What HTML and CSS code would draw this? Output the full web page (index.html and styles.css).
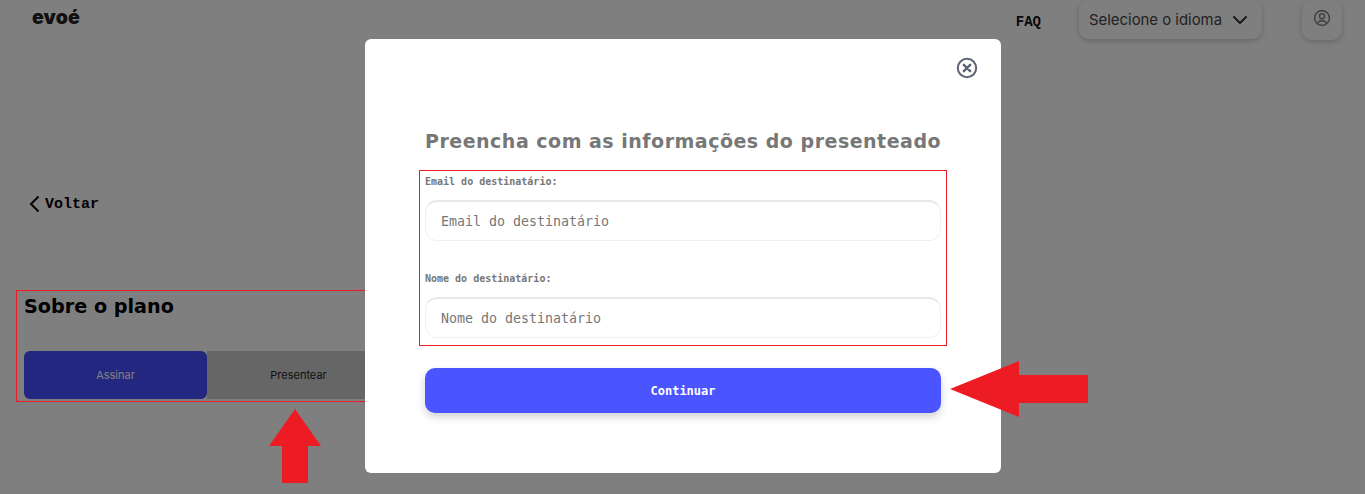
FILE: index.html
```html
<!DOCTYPE html>
<html lang="pt-BR">
<head>
<meta charset="utf-8">
<title>Evoé</title>
<link rel="stylesheet" href="styles.css">
</head>
<body>
<div class="page">
  <header class="topbar">
    <div class="logo">evoé</div>
    <nav class="topnav">
      <a class="faq">FAQ</a>
      <div class="lang"><span>Selecione o idioma</span>
        <svg width="16" height="10" viewBox="0 0 16 10"><path d="M2 2l6 6 6-6" fill="none" stroke="#333" stroke-width="2" stroke-linecap="round" stroke-linejoin="round"/></svg>
      </div>
      <div class="user">
        <svg width="18" height="18" viewBox="0 0 18 18" fill="none" stroke="#888" stroke-width="1.6"><circle cx="9" cy="9" r="7.4"/><circle cx="9" cy="7.3" r="2.5"/><path d="M4.6 14.2c1-1.9 2.6-2.6 4.4-2.6s3.400.7 4.400 2.600"/></svg>
      </div>
    </nav>
  </header>
  <a class="back">
    <svg width="11" height="18" viewBox="0 0 11 18"><path d="M9.500 1.500L2 9l7.500 7.500" fill="none" stroke="#000" stroke-width="2"/></svg>
    <span>Voltar</span>
  </a>
  <section class="plan">
    <h2>Sobre o plano</h2>
    <div class="tabs">
      <button class="tab tab-on">Assinar</button>
      <button class="tab">Presentear</button>
    </div>
  </section>
</div>

<div class="overlay">
  <div class="modal">
    <div class="modal-top">
      <svg width="22" height="22" viewBox="0 0 22 22" fill="none" stroke="#5b6470" stroke-width="2"><circle cx="11" cy="11" r="9.200"/><path d="M7.800 7.800l6.400 6.400M14.200 7.800l-6.400 6.400" stroke-linecap="round" stroke-width="2.400"/></svg>
    </div>
    <h1>Preencha com as informações do presenteado</h1>
    <form class="form">
      <label class="field">
        <span class="field-label">Email do destinatário:</span>
        <input class="input" type="text" placeholder="Email do destinatário">
      </label>
      <label class="field">
        <span class="field-label">Nome do destinatário:</span>
        <input class="input" type="text" placeholder="Nome do destinatário">
      </label>
      <button class="submit" type="button">Continuar</button>
    </form>
  </div>
</div>

<div class="mark mark-plan"></div>
<div class="mark mark-form"></div>
<svg class="arrow arrow-up" width="52" height="74" viewBox="0 0 52 74"><polygon points="26,0 52,37 39,37 39,74 13,74 13,37 0,37" fill="#ed1c24"/></svg>
<svg class="arrow arrow-left" width="138" height="56" viewBox="0 0 138 56"><polygon points="0,28 69,0 69,14 138,14 138,42 69,42 69,56" fill="#ed1c24"/></svg>
</body>
</html>
```
FILE: styles.css
```css
* { box-sizing: border-box; }
html, body { margin: 0; height: 494px; overflow: hidden; background: #fff; }
body { font-family: "DejaVu Sans Mono", monospace; color: #000; }

.page { height: 494px; padding: 0 0 0 24px; }

.topbar { display: flex; justify-content: space-between; align-items: flex-start; height: 40px; padding-right: 23px; }
.logo { margin: 8px 0 0 8px; font-family: "Inter", sans-serif; font-weight: 900; font-size: 19.500px; line-height: 19px; letter-spacing: 0.100px; color: #222; }
.topnav { display: flex; align-items: flex-start; }
.faq { margin: 13px 38px 0 0; font-family: "Liberation Mono", monospace; font-weight: 700; font-size: 14px; line-height: 18px; color: #111; }
.lang { display: flex; align-items: center; justify-content: space-between; width: 183px; height: 39px; padding: 0 14px 0 10px; border-radius: 10px; background: #fff; box-shadow: 0 2px 6px rgba(0,0,0,.2); font-family: "Inter", sans-serif; font-size: 14.900px; color: #444; }
.user { display: flex; justify-content: center; align-items: center; width: 40px; height: 40px; margin-left: 40px; padding-bottom: 5px; border-radius: 10px; background: #fff; box-shadow: 0 2px 6px rgba(0,0,0,.2); }

.back { display: flex; align-items: center; gap: 5px; margin: 155px 0 0 5px; height: 18px; font-family: "Liberation Mono", monospace; font-weight: 700; font-size: 15px; color: #000; }

.plan { margin-top: 85px; }
.plan h2 { margin: 0; font-family: "DejaVu Sans", sans-serif; font-weight: 700; font-size: 19.200px; line-height: 18px; height: 53px; color: #000; }
.tabs { display: flex; width: 370px; }
.tab { flex: 0 0 183px; height: 48px; padding: 0; border: 0; border-radius: 6px; background: #cacdca; font-family: "Inter", sans-serif; font-size: 11px; color: #222; }
.tab + .tab { flex: 1; border-radius: 0; padding-right: 4px; }
.tab-on { background: #484ffe; color: #fff; }

.overlay { position: fixed; inset: 0; background: rgba(0,0,0,.5); display: flex; justify-content: center; padding: 39px 0 0 1px; }
.modal { width: 636px; height: 434px; background: #fff; border-radius: 6px; padding: 0 60px; }
.modal-top { display: flex; justify-content: flex-end; margin-right: -37px; padding-top: 18px; height: 87px; }
.modal h1 { margin: 0; height: 44px; font-family: "DejaVu Sans", sans-serif; font-weight: 700; font-size: 19px; line-height: 30px; color: #777; text-align: center; white-space: nowrap; letter-spacing: 0.500px; }

.form { display: flex; flex-direction: column; }
.field { display: flex; flex-direction: column; height: 97px; }
.field-label { height: 30px; padding-top: 5px; font-family: "DejaVu Sans Mono", monospace; font-weight: 700; font-size: 10px; line-height: 14px; color: #777; }
.input { width: 516px; height: 41px; padding: 0 15px; border: 1px solid #f0f0f0; border-top: 2px solid #e8e8e8; border-radius: 12px; background: #fff; font-family: "DejaVu Sans Mono", monospace; font-size: 13.300px; color: #333; outline: 0; }
.input::placeholder { color: #777; opacity: 1; }
.submit { width: 516px; height: 45px; margin-top: 4px; border: 0; border-radius: 10px; background: #4a54ff; box-shadow: 0 4px 8px rgba(0,0,0,.18); font-family: "DejaVu Sans Mono", monospace; font-weight: 700; font-size: 12px; color: #fff; }

.mark { position: absolute; border: 1px solid #ed1c24; }
.mark-plan { left: 16px; top: 290px; width: 349px; height: 112px; border-right: 0; }
.mark-form { left: 419px; top: 170px; width: 528px; height: 176px; }
.arrow { position: absolute; }
.arrow-up { left: 269px; top: 409px; }
.arrow-left { left: 950px; top: 361px; }
```
